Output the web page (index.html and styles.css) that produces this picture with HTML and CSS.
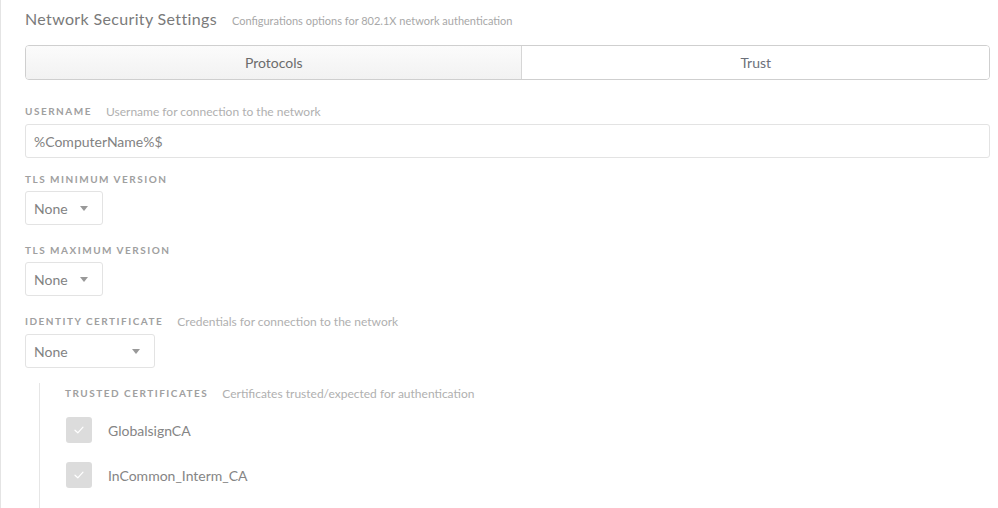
FILE: index.html
```html
<!DOCTYPE html>
<html>
<head>
<meta charset="utf-8">
<link rel="stylesheet" href="styles.css">
</head>
<body>
<div class="page">
  <div class="header">
    <h1 class="title">Network Security Settings</h1>
    <span class="subtitle">Configurations options for 802.1X network authentication</span>
  </div>
  <div class="tabs">
    <div class="tab tab-protocols">Protocols</div>
    <div class="tab tab-trust">Trust</div>
  </div>

  <div class="field field-username">
    <div class="label"><span class="label-name">USERNAME</span><span class="label-desc">Username for connection to the network</span></div>
    <div class="input">%ComputerName%$</div>
  </div>

  <div class="field field-tlsmin">
    <div class="label"><span class="label-name">TLS MINIMUM VERSION</span></div>
    <div class="select select-small"><span>None</span><span class="caret"></span></div>
  </div>

  <div class="field field-next">
    <div class="label"><span class="label-name">TLS MAXIMUM VERSION</span></div>
    <div class="select select-small"><span>None</span><span class="caret"></span></div>
  </div>

  <div class="field field-identity">
    <div class="label"><span class="label-name">IDENTITY CERTIFICATE</span><span class="label-desc">Credentials for connection to the network</span></div>
    <div class="select select-wide"><span>None</span><span class="caret"></span></div>
  </div>

  <div class="trusted">
    <div class="label"><span class="label-name">TRUSTED CERTIFICATES</span><span class="label-desc">Certificates trusted/expected for authentication</span></div>
    <div class="cert-list">
      <div class="cert">
        <span class="checkbox"><svg width="12" height="10" viewBox="0 0 12 10"><path d="M2 5.2 L4.8 7.8 L10 2.2" fill="none" stroke="#ffffff" stroke-width="1.2" stroke-linecap="round" stroke-linejoin="round"/></svg></span>
        <span class="cert-name">GlobalsignCA</span>
      </div>
      <div class="cert">
        <span class="checkbox"><svg width="12" height="10" viewBox="0 0 12 10"><path d="M2 5.2 L4.8 7.8 L10 2.2" fill="none" stroke="#ffffff" stroke-width="1.2" stroke-linecap="round" stroke-linejoin="round"/></svg></span>
        <span class="cert-name">InCommon_Interm_CA</span>
      </div>
    </div>
  </div>
</div>
</body>
</html>
```

FILE: styles.css
```css
html, body {
  margin: 0;
  padding: 0;
  background: #ffffff;
}
body {
  font-family: Lato, "Open Sans", "Liberation Sans", sans-serif;
  color: #808080;
}
.page {
  border-left: 1px solid #e4e4e4;
  min-height: 508px;
  box-sizing: border-box;
  padding: 9px 8px 0 24px;
}
.header {
  display: flex;
  align-items: baseline;
  gap: 15px;
  height: 20px;
}
.title {
  margin: 0;
  font-size: 16px;
  font-weight: 400;
  letter-spacing: 0.35px;
  color: #7a7a7a;
  line-height: 20px;
}
.subtitle {
  font-size: 11px;
  color: #a8a8a8;
}
.tabs {
  margin-top: 16px;
  display: grid;
  grid-template-columns: 497fr 467fr;
  height: 35px;
  box-sizing: border-box;
  border: 1px solid #cfcfcf;
  border-radius: 4px;
  overflow: hidden;
}
.tab {
  display: flex;
  align-items: center;
  justify-content: center;
  font-size: 14px;
}
.tab-protocols {
  background: linear-gradient(#fbfbfb, #f2f2f2);
  color: #6c6c6c;
  border-right: 1px solid #d6d6d6;
}
.tab-trust {
  background: #ffffff;
  color: #6c707a;
}
.label {
  display: flex;
  align-items: center;
  gap: 14px;
  height: 14px;
}
.label-name {
  font-size: 10px;
  font-weight: 700;
  letter-spacing: 1.5px;
  color: #a0a0a0;
}
.label-desc {
  font-size: 12px;
  color: #b0b0b0;
}
.field .label {
  margin-bottom: 5px;
}
.field-username {
  margin-top: 24px;
}
.field-username .label {
  margin-bottom: 6px;
}
.field-tlsmin {
  margin-top: 14px;
}
.field-next {
  margin-top: 18px;
}
.field-identity {
  margin-top: 18px;
}
.field-identity .label {
  margin-bottom: 6px;
}
.input {
  height: 34px;
  box-sizing: border-box;
  border: 1px solid #e3e3e3;
  border-radius: 3px;
  padding: 0 8px;
  display: flex;
  align-items: center;
  font-size: 14px;
  color: #828282;
}
.select {
  height: 34px;
  box-sizing: border-box;
  border: 1px solid #e3e3e3;
  border-radius: 3px;
  padding: 0 14px 0 8px;
  display: flex;
  align-items: center;
  justify-content: space-between;
  font-size: 14px;
  color: #828282;
}
.select-small {
  width: 78px;
}
.select-wide {
  width: 130px;
}
.caret {
  width: 0;
  height: 0;
  border-left: 4px solid transparent;
  border-right: 4px solid transparent;
  border-top: 5px solid #999999;
}
.trusted {
  margin-top: 15px;
  margin-left: 14px;
  border-left: 1px solid #e6e6e6;
  padding: 3px 0 20px 25px;
}
.trusted .label {
  margin-bottom: 17px;
}
.cert-list {
  display: flex;
  flex-direction: column;
  gap: 19px;
}
.cert {
  display: flex;
  align-items: center;
  gap: 16px;
}
.checkbox {
  width: 26px;
  height: 26px;
  margin-left: 1px;
  border-radius: 3px;
  background: #dcdcdc;
  display: flex;
  align-items: center;
  justify-content: center;
}
.cert-name {
  font-size: 14px;
  color: #858585;
}
```
